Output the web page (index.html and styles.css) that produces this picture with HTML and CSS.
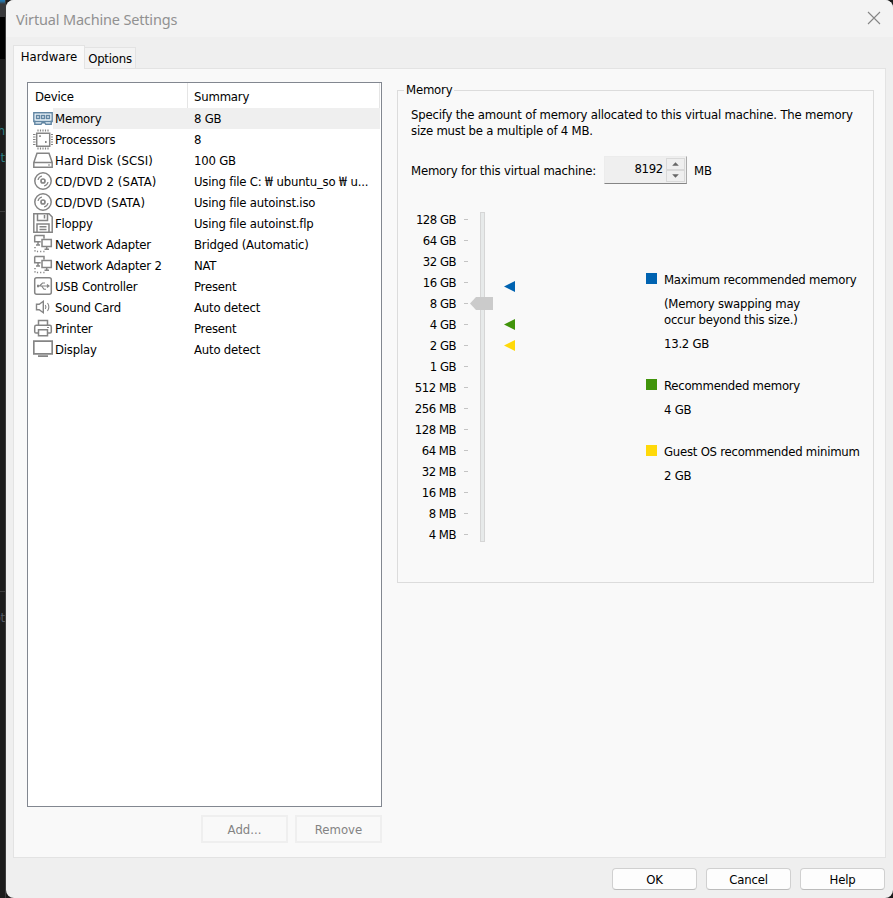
FILE: index.html
```html
<!DOCTYPE html>
<html lang="en">
<head>
<meta charset="utf-8">
<title>Virtual Machine Settings</title>
<link rel="stylesheet" href="styles.css">
</head>
<body>
<aside class="backdrop"><i class="glow"></i><i class="black"></i><span class="frag f1">ch</span><span class="frag f2">t</span><i class="rule r1"></i><i class="rule r2"></i><span class="frag f3">ot</span></aside>
<main class="window">
  <header class="titlebar">
    <h1>Virtual Machine Settings</h1>
    <svg class="close" width="14" height="14" viewBox="0 0 14 14"><path d="M1 1l12 12M13 1L1 13"/></svg>
  </header>
  <nav class="tabs"><span class="tab active">Hardware</span><span class="tab">Options</span></nav>
  <section class="page">
    <div class="left">
      <div class="list">
        <div class="head"><span class="name">Device</span><span class="sum">Summary</span></div>
        <div class="row selected"><svg class="blue" viewBox="0 0 20 21"><path d="M.8 4.700h18.400v8.800h-1v2.800h-5.400l-1-1.500H9l-1 1.500H1.800v-2.800h-1z" fill="#edf4fa"/><path d="M3.500 7.500h3v3h-3zM8.500 7.500h3v3h-3zM13.500 7.500h3v3h-3zM1 13.500h18"/></svg><span class="name">Memory</span><span class="sum">8 GB</span></div>
        <div class="row"><svg viewBox="0 0 20 21"><path d="M3.700 4.200h13v13h-13z"/><path d="M5 .5v2M7.500 .5v2M10 .5v2M12.500 .5v2M15 .5v2M5 18.500v2M7.500 18.500v2M10 18.500v2M12.500 18.500v2M15 18.500v2M0 5.500h2.500M0 8h2.500M0 10.500h2.500M0 13h2.500M0 15.500h2.500M18 5.500h2M18 8h2M18 10.500h2M18 13h2M18 15.500h2" stroke-width="1.200"/><path d="M6.200 7.200h1.600M12 13h1.600" stroke-width="1.800"/></svg><span class="name">Processors</span><span class="sum">8</span></div>
        <div class="row"><svg viewBox="0 0 20 21"><path d="M.8 12.500L4 3.200h12l3.200 9.300v4.800H.8zM1 12.500h18"/><path d="M15 15h2" stroke-width="1"/></svg><span class="name wide">Hard Disk (SCSI)</span><span class="sum">100 GB</span></div>
        <div class="row"><svg viewBox="0 0 20 21"><circle cx="10" cy="10" r="8.200"/><circle cx="10" cy="10" r="2" stroke-width="1.700"/><path d="M5 9a5 5 0 0 1 4-4M15 11a5 5 0 0 1-4 4" stroke-width="1.200"/></svg><span class="name wide">CD/DVD 2 (SATA)</span><span class="sum">Using file C:<b class="won">₩</b>ubuntu_so<b class="won">₩</b>u...</span></div>
        <div class="row"><svg viewBox="0 0 20 21"><circle cx="10" cy="10" r="8.200"/><circle cx="10" cy="10" r="2" stroke-width="1.700"/><path d="M5 9a5 5 0 0 1 4-4M15 11a5 5 0 0 1-4 4" stroke-width="1.200"/></svg><span class="name wide">CD/DVD (SATA)</span><span class="sum">Using file autoinst.iso</span></div>
        <div class="row"><svg viewBox="0 0 20 21"><path d="M.8 .8h15.200l3.200 3.200v15.200H.8zM4.500 1v6.500h10V1M11.500 2v3.500M4 19v-8h12v8M6.500 13.700h7M6.500 16.500h7"/></svg><span class="name">Floppy</span><span class="sum">Using file autoinst.flp</span></div>
        <div class="row"><svg viewBox="0 0 20 21"><path d="M1.700 1.500h9.300v3M1.700 1.500v6.300h6M9 5.500h9.300v7H9zM5 8v3M3 11h4M13.700 12.500v2.500M11.500 15.300h4.500"/><path d="M2 13v4.500h11" stroke-dasharray="1.200 2"/></svg><span class="name">Network Adapter</span><span class="sum">Bridged (Automatic)</span></div>
        <div class="row"><svg viewBox="0 0 20 21"><path d="M1.700 1.500h9.300v3M1.700 1.500v6.300h6M9 5.500h9.300v7H9zM5 8v3M3 11h4M13.700 12.500v2.500M11.500 15.300h4.500"/><path d="M2 13v4.500h11" stroke-dasharray="1.200 2"/></svg><span class="name">Network Adapter 2</span><span class="sum">NAT</span></div>
        <div class="row"><svg viewBox="0 0 20 21"><rect x="1.700" y="1.700" width="16.600" height="16.600" rx="2"/><path d="M4 10h11M6.500 10l3-3H12M8.500 10l2.500 3.200h2M14 8.500l2 1.500-2 1.500" stroke-width="1.100"/><path d="M4 10h2" stroke-width="2.600"/></svg><span class="name">USB Controller</span><span class="sum">Present</span></div>
        <div class="row"><svg viewBox="0 0 20 21"><path d="M3.500 7.300h2.700L10.300 4.300v11.400L6.200 12.700H3.500z" stroke-width="1.400"/><path d="M12.300 8q1.300 2 0 4M14.500 6q2.700 4 0 8" stroke-width="1.100"/></svg><span class="name">Sound Card</span><span class="sum">Auto detect</span></div>
        <div class="row"><svg viewBox="0 0 20 21"><path d="M5.500 7V2.500h9V7M5.500 15H3q-1.300 0-1.300-1.300V9q0-1.700 1.600-1.700h13.400q1.600 0 1.600 1.700v4.700q0 1.300-1.300 1.300h-2.500M5.500 11.700h9v6h-9z"/><path d="M14 9.500h2" stroke-width="1"/></svg><span class="name">Printer</span><span class="sum">Present</span></div>
        <div class="row"><svg viewBox="0 0 20 21"><path d="M.8 2.200h18.400v12.600H.8zM5 17.200h10" stroke-width="1.700"/></svg><span class="name">Display</span><span class="sum">Auto detect</span></div>
      </div>
      <div class="list-actions"><button class="off">Add...</button><button class="off">Remove</button></div>
    </div>
    <fieldset class="group">
      <legend>Memory</legend>
      <p class="intro">Specify the amount of memory allocated to this virtual machine. The memory<br>size must be a multiple of 4 MB.</p>
      <div class="amount"><span class="label">Memory for this virtual machine:</span>
        <div class="spin"><span class="value">8192</span><span class="arrows"><svg viewBox="0 0 18 12"><path d="M5 8L9 4l4 4z"/></svg><svg viewBox="0 0 18 12"><path d="M5 4L9 8l4-4z"/></svg></span></div>
        <span class="unit">MB</span></div>
      <div class="body">
        <ol class="scale"><li>128 GB</li><li>64 GB</li><li>32 GB</li><li>16 GB</li><li>8 GB</li><li>4 GB</li><li>2 GB</li><li>1 GB</li><li>512 MB</li><li>256 MB</li><li>128 MB</li><li>64 MB</li><li>32 MB</li><li>16 MB</li><li>8 MB</li><li>4 MB</li></ol>
        <div class="track"><svg class="thumb" viewBox="0 0 23 13"><path d="M0 6.500L6 0h17v13H6z"/></svg><i class="mark max"></i><i class="mark rec"></i><i class="mark min"></i></div>
        <div class="legend">
          <div class="item"><i class="sw max"></i><div><p>Maximum recommended memory</p><p class="gap">(Memory swapping may<br>occur beyond this size.)</p><p class="gap">13.2 GB</p></div></div>
          <div class="item"><i class="sw rec"></i><div><p>Recommended memory</p><p class="gap">4 GB</p></div></div>
          <div class="item"><i class="sw min"></i><div><p>Guest OS recommended minimum</p><p class="gap">2 GB</p></div></div>
        </div>
      </div>
    </fieldset>
  </section>
  <footer class="actions"><button>OK</button><button>Cancel</button><button>Help</button></footer>
</main>
</body>
</html>
```
FILE: styles.css
```css
* { box-sizing: border-box; }
body {
  margin: 0; display: flex; width: 893px; height: 898px; overflow: hidden;
  background: #1c1c1c; color: #000;
  font: 13px/16px "DejaVu Sans Condensed", "DejaVu Sans", sans-serif;
  font-stretch: condensed; letter-spacing: -0.2px;
}
p, h1, ol { margin: 0; padding: 0; font-weight: normal; }
.backdrop { position: relative; width: 6px; overflow: hidden; border-right: 1px solid #3d3d3d; }
.backdrop i { display: block; }
.glow { height: 17px; background: linear-gradient(#2679ae 0 1px, #38393b 4px); }
.black { height: 42px; background: #000; }
.frag { position: absolute; right: 0; color: #2d7f83; }
.f1 { top: 123px; } .f2 { top: 150px; } .f3 { top: 610px; color: #555b66; }
.backdrop .rule { position: absolute; left: 0; width: 6px; height: 1px; background: #3d3d3d; }
.r1 { top: 211px; } .r2 { top: 591px; }
.window {
  width: 887px; height: 898px; display: flex; flex-direction: column;
  background: #efefef; border-radius: 8px; overflow: hidden;
}
.titlebar { height: 37px; flex: none; display: flex; justify-content: space-between; align-items: center; background: #f3f3f3; padding: 0 12px 0 10px; }
.titlebar h1 { font: 14.5px/20px "Noto Sans", sans-serif; letter-spacing: -0.17px; color: #919191; }
.close { fill: none; stroke: #858585; stroke-width: 1.1; margin-top: -1px; }
.tabs { display: flex; align-items: flex-end; height: 32px; margin: 0 0 -1px 7px; position: relative; }
.tab { height: 22px; line-height: 22px; width: 51px; border: 1px solid #e3e3e3; border-left: 0; background: #f3f3f3; text-align: center; white-space: nowrap; letter-spacing: -0.2px; }
.tab.active { height: 24px; width: 72px; border-left: 1px solid #e3e3e3; border-bottom: 0; background: #f9f9f9; line-height: 22px; letter-spacing: 0; }
.page { display: flex; align-items: flex-start; width: 873px; height: 790px; flex: none; margin-left: 7px; border: 1px solid #e3e3e3; background: #f9f9f9; padding: 13px 11px 0 13px; }
.left { width: 355px; flex: none; }
.list { height: 725px; border: 1px solid #828790; background: #fff; }
.head, .row { display: flex; align-items: center; height: 21px; line-height: 21px; white-space: nowrap; margin-right: 1px; }
.head { height: 25px; line-height: 27px; border-right: 1px solid #e5e5e5; padding-left: 7px; align-items: flex-start; }
.head .name { width: 153px; height: 25px; border-right: 1px solid #e5e5e5; }
.head .sum { padding-left: 6px; }
.row { padding-left: 5px; }
.row svg { width: 20px; height: 21px; flex: none; fill: none; stroke: #858585; stroke-width: 1.5; }
.row svg.blue { stroke: #6286a3; stroke-width: 1.4; }
.row .name { width: 134px; padding-left: 2px; }
.row .wide { letter-spacing: 0.12px; }
.row .sum { flex: 1; padding-left: 7px; }
.row.selected span { background: #efefef; }
.won { display: inline-block; width: 15px; text-align: center; font: 14px/16px "Noto Sans CJK KR", sans-serif; letter-spacing: 0; }
button { width: 85px; height: 22px; padding: 1px 0 0; border: 1px solid #d0d0d0; border-bottom-color: #bcbcbc; border-radius: 4px; background: #fdfdfd; color: #000; font: inherit; letter-spacing: inherit; }
.list-actions { display: flex; justify-content: flex-end; gap: 7px; padding-top: 8px; }
.off { width: 87px; height: 28px; border: 2px solid #efefef; border-radius: 0; background: #f9f9f9; color: #838383; letter-spacing: 0; }
.group { width: 477px; height: 502px; margin: -1px 0 0 15px; padding: 0; border: 1px solid #dcdcdc; min-width: 0; }
legend { margin-left: 6px; padding: 0 2px; line-height: 18px; }
.intro { padding: 8px 0 0 13px; white-space: nowrap; }
.amount { display: flex; align-items: center; height: 28px; margin: 17px 0 0 13px; white-space: nowrap; }
.label { width: 193px; padding-top: 2px; }
.unit { padding-top: 2px; }
.spin { display: flex; width: 83px; height: 28px; margin-right: 7px; padding: 1px; border: 1px solid #ececec; border-right-color: #aaa; border-bottom-color: #858585; background: #efefef; }
.value { flex: 1; text-align: right; padding-right: 3px; line-height: 21px; letter-spacing: -0.3px; }
.arrows { width: 19px; display: flex; flex-direction: column; }
.arrows svg { width: 19px; height: 12px; border: 1px solid #d9d9d9; fill: #666; }
.body { display: flex; margin-top: 24px; }
.scale { width: 71px; list-style: none; letter-spacing: -0.5px; }
.scale li { height: 21px; line-height: 24px; text-align: right; padding-right: 13px; background: linear-gradient(#c4c4c4, #c4c4c4) no-repeat 66px 11px / 4px 1px; }
.track { position: relative; width: 5px; height: 330px; margin: 4px 0 0 11px; background: #e7eaea; border: 1px solid #d6d6d6; }
.thumb { position: absolute; left: -11px; top: 84px; width: 23px; height: 13px; fill: #cbcbcb; }
.mark { position: absolute; left: 23px; width: 11px; height: 11px; clip-path: polygon(0 50%, 100% 0, 100% 100%); }
.mark.max { top: 68px; } .mark.rec { top: 106px; } .mark.min { top: 127px; }
.max { background: #0063b1; } .rec { background: #41940b; } .min { background: #ffd90a; }
.legend { margin: 64px 0 0 161px; white-space: nowrap; letter-spacing: -0.24px; }
.item { display: flex; margin-bottom: 26px; }
.sw { width: 11px; height: 11px; margin: 1px 7px 0 0; }
.gap { margin-top: 8px; }
.actions { display: flex; justify-content: flex-end; gap: 9px; padding: 10px 8px 0 0; }
```
